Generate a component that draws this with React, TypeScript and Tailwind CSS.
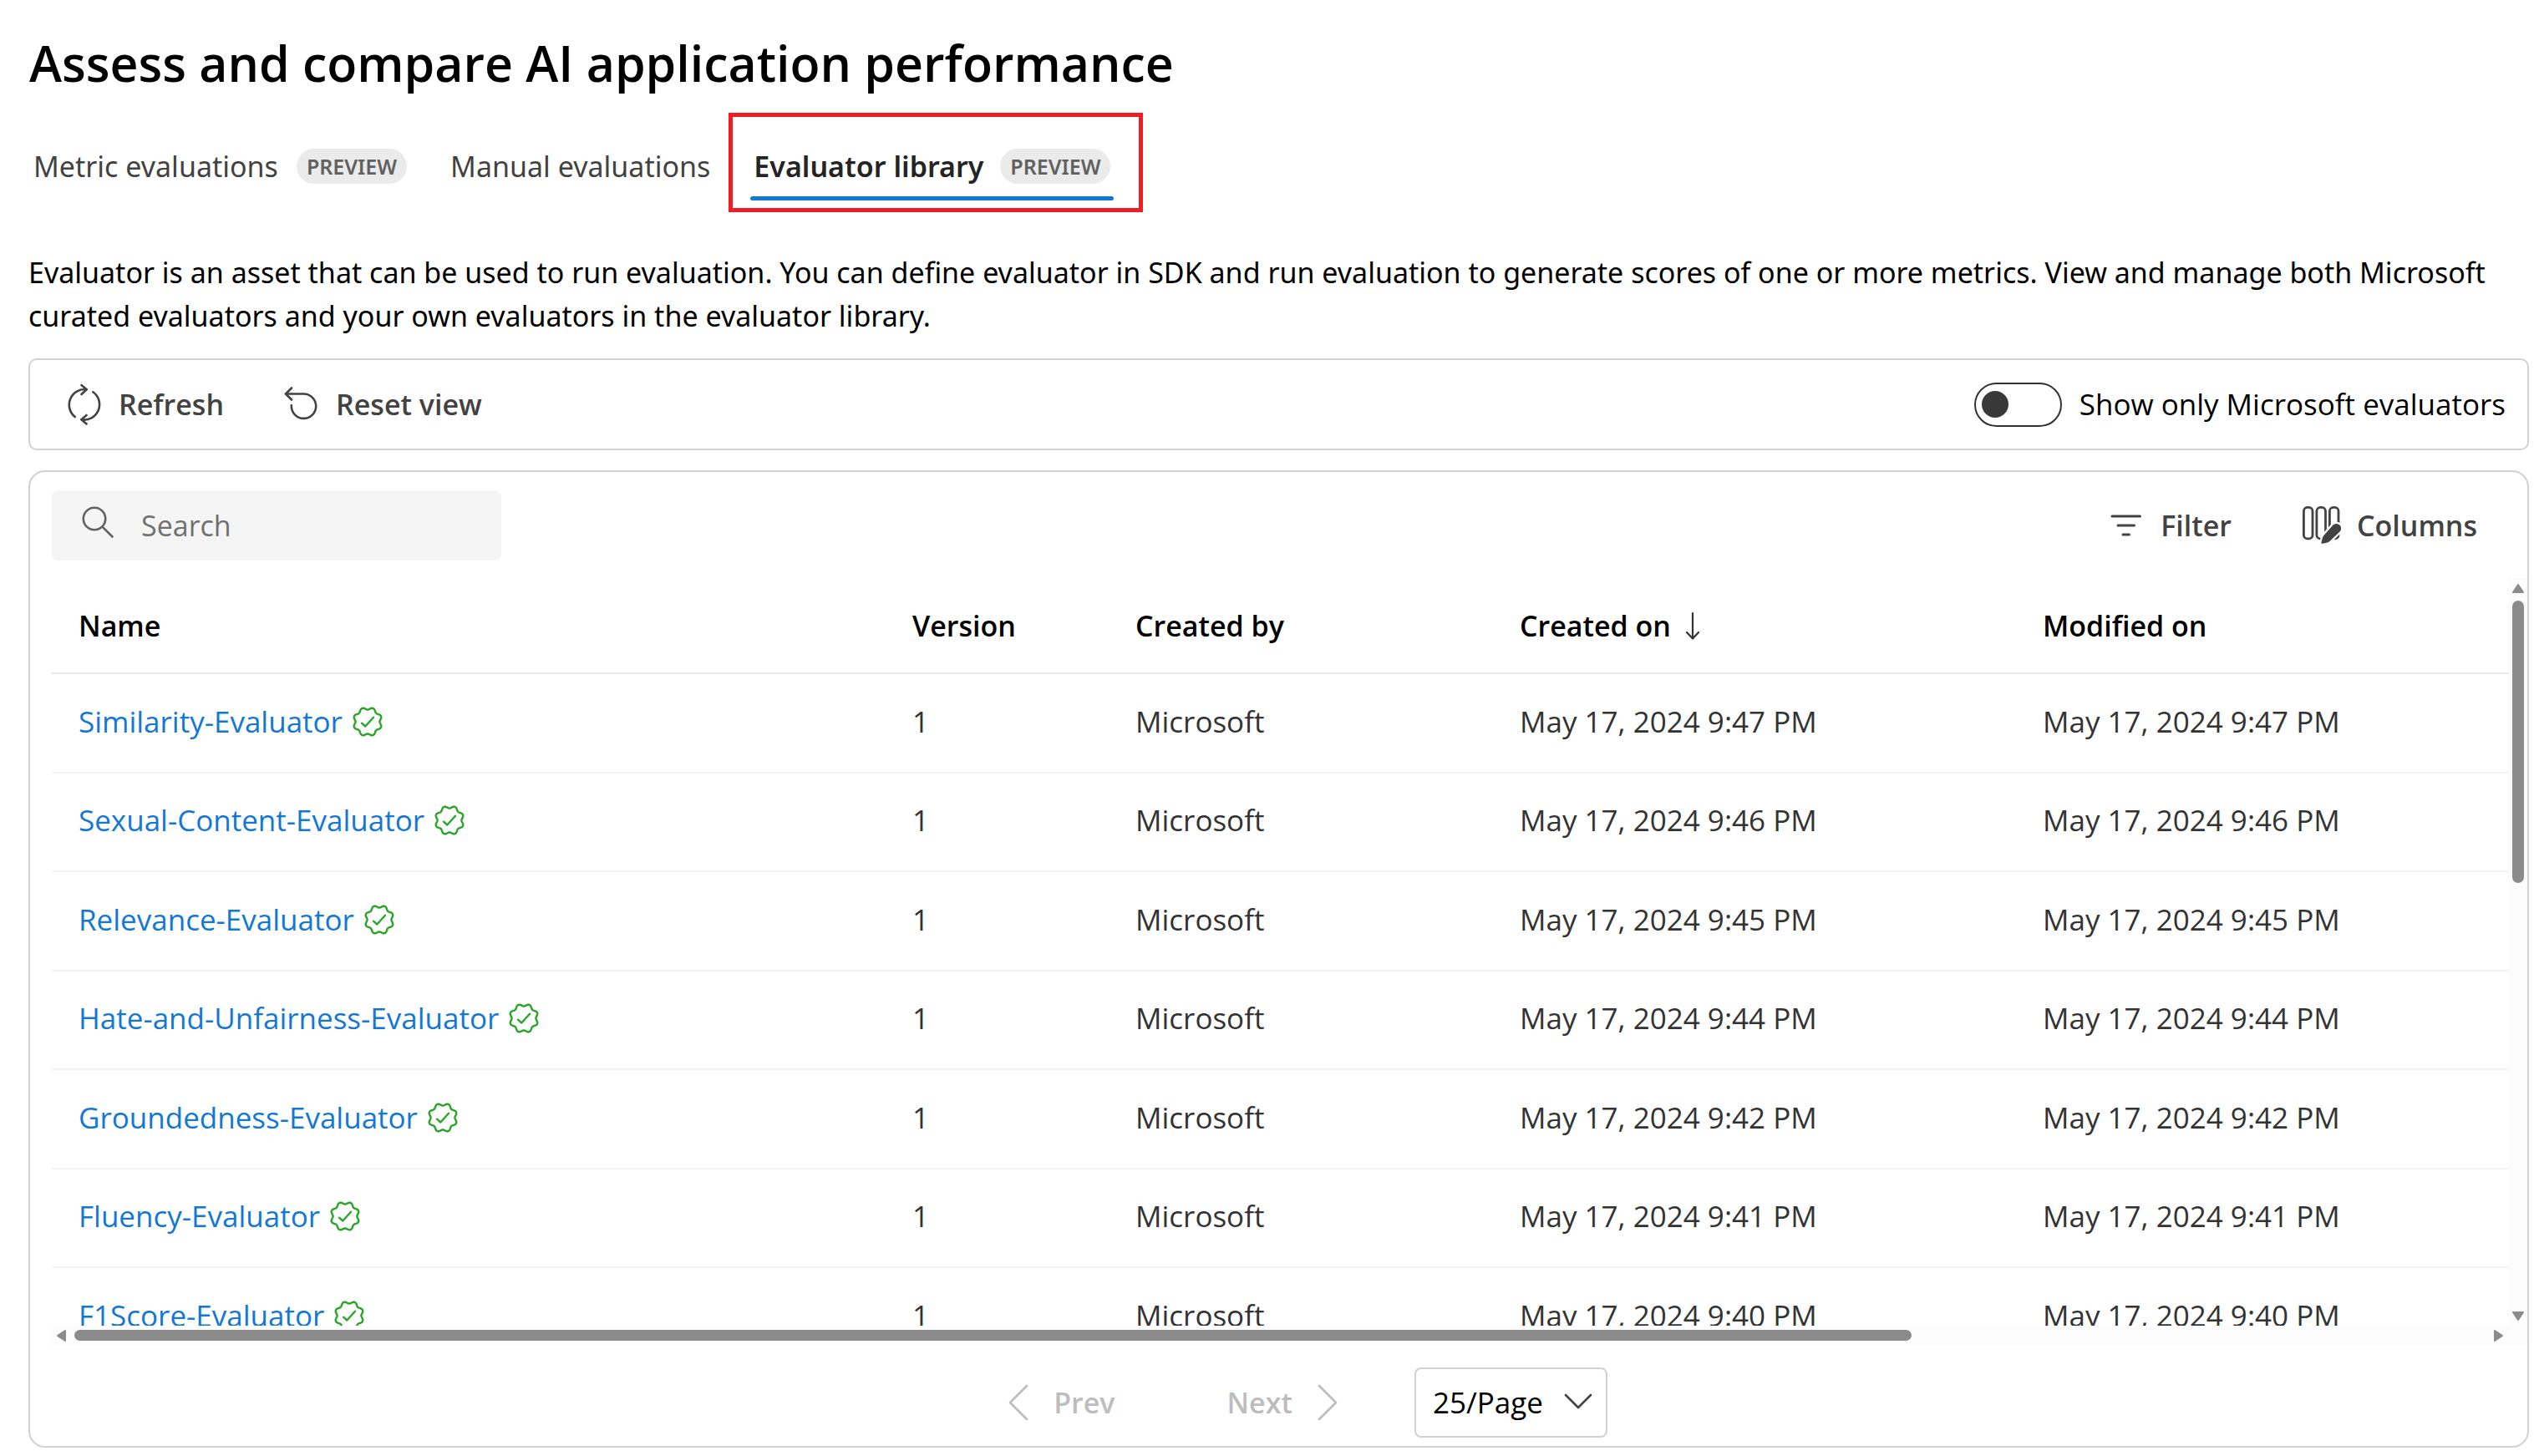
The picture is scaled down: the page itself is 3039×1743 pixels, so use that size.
import type { ReactNode } from "react";

const evaluators = [
  { name: "Similarity-Evaluator", date: "May 17, 2024 9:47 PM" },
  { name: "Sexual-Content-Evaluator", date: "May 17, 2024 9:46 PM" },
  { name: "Relevance-Evaluator", date: "May 17, 2024 9:45 PM" },
  { name: "Hate-and-Unfairness-Evaluator", date: "May 17, 2024 9:44 PM" },
  { name: "Groundedness-Evaluator", date: "May 17, 2024 9:42 PM" },
  { name: "Fluency-Evaluator", date: "May 17, 2024 9:41 PM" },
  { name: "F1Score-Evaluator", date: "May 17, 2024 9:40 PM" },
];

// Outline of a seal with eight soft scallops, centred on 20,20.
const sealPath =
  Array.from({ length: 128 }, (_, i) => {
    const a = (i / 128) * Math.PI * 2;
    const r = 15.9 - 1.5 * Math.cos(8 * a);
    return `${i ? "L" : "M"}${(20 + r * Math.cos(a)).toFixed(2)} ${(20 + r * Math.sin(a)).toFixed(2)}`;
  }).join("") + "Z";

function VerifiedIcon() {
  return (
    <svg viewBox="0 0 40 40" className="size-10 shrink-0 text-[#2aa52a]" fill="none" stroke="currentColor" strokeLinecap="round" strokeLinejoin="round" role="img" aria-label="Verified">
      <path d={sealPath} strokeWidth="2.4" />
      <path d="M13 21.7l4.3 3.8L27 14.7" strokeWidth="2.4" />
    </svg>
  );
}

function RefreshIcon() {
  return (
    <svg viewBox="0 0 42 52" className="h-[52px] w-[42px]" fill="none" stroke="currentColor" strokeWidth="2.6" strokeLinecap="round" strokeLinejoin="round" aria-hidden="true">
      <path d="M9.7 41A18.5 18.5 0 0 1 23.5 8.2" />
      <path d="M17.5 3l6.2 5.3-6.2 5.7" />
      <path d="M31.3 11.3A18.3 18.3 0 0 1 17.6 44.3" />
      <path d="M23.6 39l-6.2 5.3 6.2 5.2" />
    </svg>
  );
}

function ResetIcon() {
  return (
    <svg viewBox="0 0 42 42" className="size-[42px]" fill="none" stroke="currentColor" strokeWidth="2.6" strokeLinecap="round" strokeLinejoin="round" aria-hidden="true">
      <path d="M2 8.500H23.500a14.700 14.700 0 1 1-14.700 14.700v-.9" />
      <path d="M9 1.500L2 8.500l7 7" />
    </svg>
  );
}

function SearchIcon() {
  return (
    <svg viewBox="0 0 40 40" className="size-10 text-[#616161]" fill="none" stroke="currentColor" strokeWidth="2.6" strokeLinecap="round" aria-hidden="true">
      <circle cx="16" cy="16" r="13.2" />
      <path d="M25.800 25.800L37.500 37.500" />
    </svg>
  );
}

function FilterIcon() {
  return (
    <svg viewBox="0 0 38 38" className="size-[38px]" fill="none" stroke="currentColor" strokeWidth="3" strokeLinecap="round" aria-hidden="true">
      <path d="M2 8H35.500M9 19H28.500M15 30H22.500" />
    </svg>
  );
}

function ColumnsIcon() {
  return (
    <svg viewBox="0 0 48 48" className="size-12" fill="none" stroke="currentColor" strokeWidth="2.8" aria-hidden="true">
      <rect x="2.400" y="2.400" width="10.600" height="37.500" rx="4.500" />
      <rect x="17.900" y="2.400" width="10.600" height="37.500" rx="4.500" />
      <rect x="33.400" y="2.400" width="10.600" height="37.500" rx="4.500" />
      <path
        d="M37.500 23.600a5.600 5.600 0 0 1 8 7.900L34 42.500a9 9 0 0 1-3.500 2l-5.400 1.300c-1 .3-1.800-.6-1.600-1.500l1.300-5.400a9 9 0 0 1 2-3.500z"
        fill="white"
        stroke="white"
        strokeWidth="4.500"
      />
      <path
        d="M37.500 23.600a5.600 5.600 0 0 1 8 7.900L34 42.500a9 9 0 0 1-3.500 2l-5.400 1.300c-1 .3-1.800-.6-1.600-1.500l1.300-5.400a9 9 0 0 1 2-3.500z"
        fill="currentColor"
        stroke="none"
      />
    </svg>
  );
}

function SortDownIcon() {
  return (
    <svg viewBox="0 0 20 36" className="h-9 w-5 text-[#333333]" fill="none" stroke="currentColor" strokeWidth="2.200" strokeLinecap="round" strokeLinejoin="round" aria-hidden="true">
      <path d="M10 3V33M3 26l7 7.500 7-7.500" />
    </svg>
  );
}

function Chevron({ d, className }: { d: string; className: string }) {
  return (
    <svg viewBox="0 0 48 48" className={className} fill="none" stroke="currentColor" strokeWidth="2.600" strokeLinecap="round" strokeLinejoin="round" aria-hidden="true">
      <path d={d} />
    </svg>
  );
}

function ScrollArrow({ d }: { d: string }) {
  return (
    <svg viewBox="0 0 16 16" className="size-4 shrink-0 text-[#8b8b8b]" fill="currentColor" stroke="currentColor" strokeWidth="2" strokeLinejoin="round" aria-hidden="true">
      <path d={d} />
    </svg>
  );
}

function PreviewBadge() {
  return (
    <span className="flex h-[42px] items-center rounded-full bg-[#ebebeb] px-3 text-[25px] leading-[42px] font-semibold text-[#616161]">
      PREVIEW
    </span>
  );
}

function HeaderCell({ children }: { children: ReactNode }) {
  return (
    <th scope="col" className="h-[115px] border-b-2 border-[#e8e8e8] pl-8 text-left text-[34px] font-semibold">
      {children}
    </th>
  );
}

export default function App() {
  return (
    <main className="bg-white pt-[35px] pb-2 font-['Open_Sans','Noto_Sans',sans-serif] text-[35px] leading-[52px] text-black">
      <h1 className="pl-[35px] text-[59px] leading-[80px] font-semibold">Assess and compare AI application performance</h1>

      <div role="tablist" className="mt-5 flex items-start pl-10 font-['Noto_Sans',sans-serif] text-[34px] text-[#424242]">
        <button type="button" role="tab" aria-selected="false" className="mt-[38px] flex items-center gap-[22px]">
          Metric evaluations
          <PreviewBadge />
        </button>
        <button type="button" role="tab" aria-selected="false" className="mt-[38px] ml-[52px]">
          Manual evaluations
        </button>
        <div className="ml-[22px] border-5 border-[#ee1c25] pt-[33px] pr-[30px] pb-[9px] pl-[21px]">
          <button type="button" role="tab" aria-selected="true" className="flex flex-col gap-2.5">
            <span className="flex items-center gap-5 px-1 font-semibold text-[#242424]">
              Evaluator library
              <PreviewBadge />
            </span>
            <span className="h-[5px] w-full rounded-full bg-[#1378d4]" />
          </button>
        </div>
      </div>

      <p className="mt-[46px] pl-[34px] font-['Noto_Sans',sans-serif] text-[34px]">
        Evaluator is an asset that can be used to run evaluation. You can define evaluator in SDK and run evaluation to
        generate scores of one or more metrics. View and manage both Microsoft curated evaluators and your own evaluators
        in the evaluator library.
      </p>

      <div className="mt-[25px] mr-3 ml-[34px] flex h-[110px] items-center rounded-[10px] border-2 border-[#d1d1d1] pr-[26px] pl-11">
        <div className="flex gap-[72px] text-[34px] font-semibold text-[#424242]">
          <button type="button" className="flex items-center gap-5">
            <RefreshIcon />
            Refresh
          </button>
          <button type="button" className="flex items-center gap-5">
            <ResetIcon />
            Reset view
          </button>
        </div>
        <label className="ml-auto flex items-center gap-[21px]">
          <input
            type="checkbox"
            role="switch"
            className="flex h-[53px] w-[105px] appearance-none items-center rounded-full border-2 border-[#333333] pl-[7px] before:size-8 before:rounded-full before:bg-[#383838] before:content-['']"
          />
          Show only Microsoft evaluators
        </label>
      </div>

      <section className="mt-6 mr-3 ml-[34px] rounded-[20px] border-2 border-[#d1d1d1] pt-[22px] pb-2.5 pl-[26px]">
        <div className="flex items-center justify-between pr-[60px]">
          <label className="flex h-[84px] w-[538px] items-center gap-8 rounded-lg bg-[#f5f5f5] pr-4 pl-[35px]">
            <span className="pb-2">
              <SearchIcon />
            </span>
            <input
              type="search"
              aria-label="Search"
              placeholder="Search"
              className="min-w-0 flex-1 bg-transparent text-[34px] outline-none placeholder:text-[#707070]"
            />
          </label>
          <div className="flex gap-[84px] text-[34px] font-semibold text-[#424242]">
            <button type="button" className="flex items-center gap-[22px]">
              <FilterIcon />
              Filter
            </button>
            <button type="button" className="flex items-center gap-[18px]">
              <ColumnsIcon />
              Columns
            </button>
          </div>
        </div>

        <div className="mt-[21px] grid grid-cols-[minmax(0,1fr)_23px] grid-rows-[895px_23px]">
          <div className="overflow-hidden">
            <table className="w-full table-fixed border-separate border-spacing-0">
              <colgroup>
                <col className="w-[998px]" />
                <col className="w-[267px]" />
                <col className="w-[460px]" />
                <col className="w-[626px]" />
                <col />
              </colgroup>
              <thead>
                <tr>
                  <HeaderCell>Name</HeaderCell>
                  <HeaderCell>Version</HeaderCell>
                  <HeaderCell>Created by</HeaderCell>
                  <HeaderCell>
                    <span className="flex items-center gap-4">
                      Created on
                      <SortDownIcon />
                    </span>
                  </HeaderCell>
                  <HeaderCell>Modified on</HeaderCell>
                </tr>
              </thead>
              <tbody className="text-[#333333] [&_td]:border-b-2 [&_td]:border-[#f3f3f3] [&_td]:pb-1 [&_td]:pl-8">
                {evaluators.map((e) => (
                  <tr key={e.name} className="odd:h-[119px] even:h-[118px]">
                    <td>
                      <span className="flex items-center gap-2.5">
                        <a href="#" className="text-[#1378d4]">
                          {e.name}
                        </a>
                        <VerifiedIcon />
                      </span>
                    </td>
                    <td>1</td>
                    <td>Microsoft</td>
                    <td>{e.date}</td>
                    <td>{e.date}</td>
                  </tr>
                ))}
              </tbody>
            </table>
          </div>
          <div className="flex flex-col items-center bg-[#fcfcfc] pt-1 pb-1">
            <ScrollArrow d="M8 4L14 13H2Z" />
            <div className="mt-[7px] h-[338px] w-3.5 rounded-full bg-[#8b8b8b]" />
            <div className="mt-auto">
              <ScrollArrow d="M8 13L14 4H2Z" />
            </div>
          </div>
          <div className="flex items-center bg-[#fcfcfc] px-1">
            <ScrollArrow d="M3 8L12 2V14Z" />
            <div className="ml-[7px] h-[13px] w-3/4 rounded-full bg-[#8b8b8b]" />
            <div className="ml-auto">
              <ScrollArrow d="M13 8L4 2V14Z" />
            </div>
          </div>
          <div className="bg-[#fcfcfc]" />
        </div>

        <div className="mt-[27px] flex items-center justify-center pl-8 text-[34px]">
          <button type="button" disabled className="flex items-center gap-[18px] font-semibold text-[#bdbdbd]">
            <Chevron d="M34 4L14 24L34 44" className="size-12" />
            Prev
          </button>
          <button type="button" disabled className="ml-[134px] flex items-center gap-[18px] font-semibold text-[#bdbdbd]">
            Next
            <Chevron d="M14 4L34 24L14 44" className="size-12" />
          </button>
          <div className="relative ml-20">
            <select
              aria-label="Items per page"
              className="h-[84px] w-[231px] appearance-none rounded-lg border-2 border-[#d1d1d1] bg-white pl-5 text-[35px] text-black"
            >
              <option>25/Page</option>
            </select>
            <Chevron d="M9 16L24 31L39 16" className="pointer-events-none absolute top-[17px] right-[11px] size-12 text-[#424242]" />
          </div>
        </div>
      </section>
    </main>
  );
}
